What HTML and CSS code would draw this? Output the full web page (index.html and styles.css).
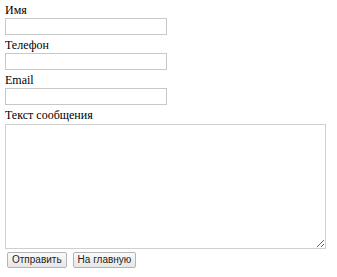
FILE: index.html
```html
<!DOCTYPE html>
<html lang="ru">
  <head>
    <meta charset="UTF-8" />
    <title>Обратная связь</title>
    <link rel="stylesheet" href="styles.css">
  </head>
  <body>
    <form class="feedback-form" method="POST" action="/send">
      <label class="field">
        <span>Имя</span>
        <input type="text" name="name" />
      </label>
      <label class="field">
        <span>Телефон</span>
        <input type="text" name="phone" />
      </label>
      <label class="field">
        <span>Email</span>
        <input type="email" name="email" />
      </label>
      <label class="field">
        <span>Текст сообщения</span>
        <textarea name="message"></textarea>
      </label>
      <div class="actions">
        <button type="submit">Отправить</button>
        <button type="button">На главную</button>
      </div>
    </form>
  </body>
</html>
```

FILE: styles.css
```css
*,
*::before,
*::after {
  margin: 0;
  padding: 0;
  box-sizing: border-box;
}

body {
  background: #fff;
  color: #000;
  font-family: "Liberation Serif", "Times New Roman", serif;
  font-size: 12px;
  padding: 2px 5px;
}

.feedback-form {
  display: flex;
  flex-direction: column;
}

.field {
  display: flex;
  flex-direction: column;
  align-items: flex-start;
}

.field span {
  line-height: 16px;
}

.field input {
  width: 162px;
  height: 17px;
  margin-bottom: 2px;
  border: 1px solid #c8c8c8;
  font: inherit;
}

.field textarea {
  width: 321px;
  height: 125px;
  margin-top: 1px;
  border: 1px solid #cfcfcf;
  resize: both;
  font: inherit;
}

.actions {
  display: flex;
  gap: 6px;
  padding: 3px 2px;
}

.actions button {
  height: 16px;
  padding: 0 4px;
  border: 1px solid #b4b4b4;
  border-radius: 2px;
  background: linear-gradient(#fafafa, #e6e6e6);
  color: #222;
  font-family: "Liberation Sans", Arial, sans-serif;
  font-size: 10px;
  line-height: 14px;
}
```
